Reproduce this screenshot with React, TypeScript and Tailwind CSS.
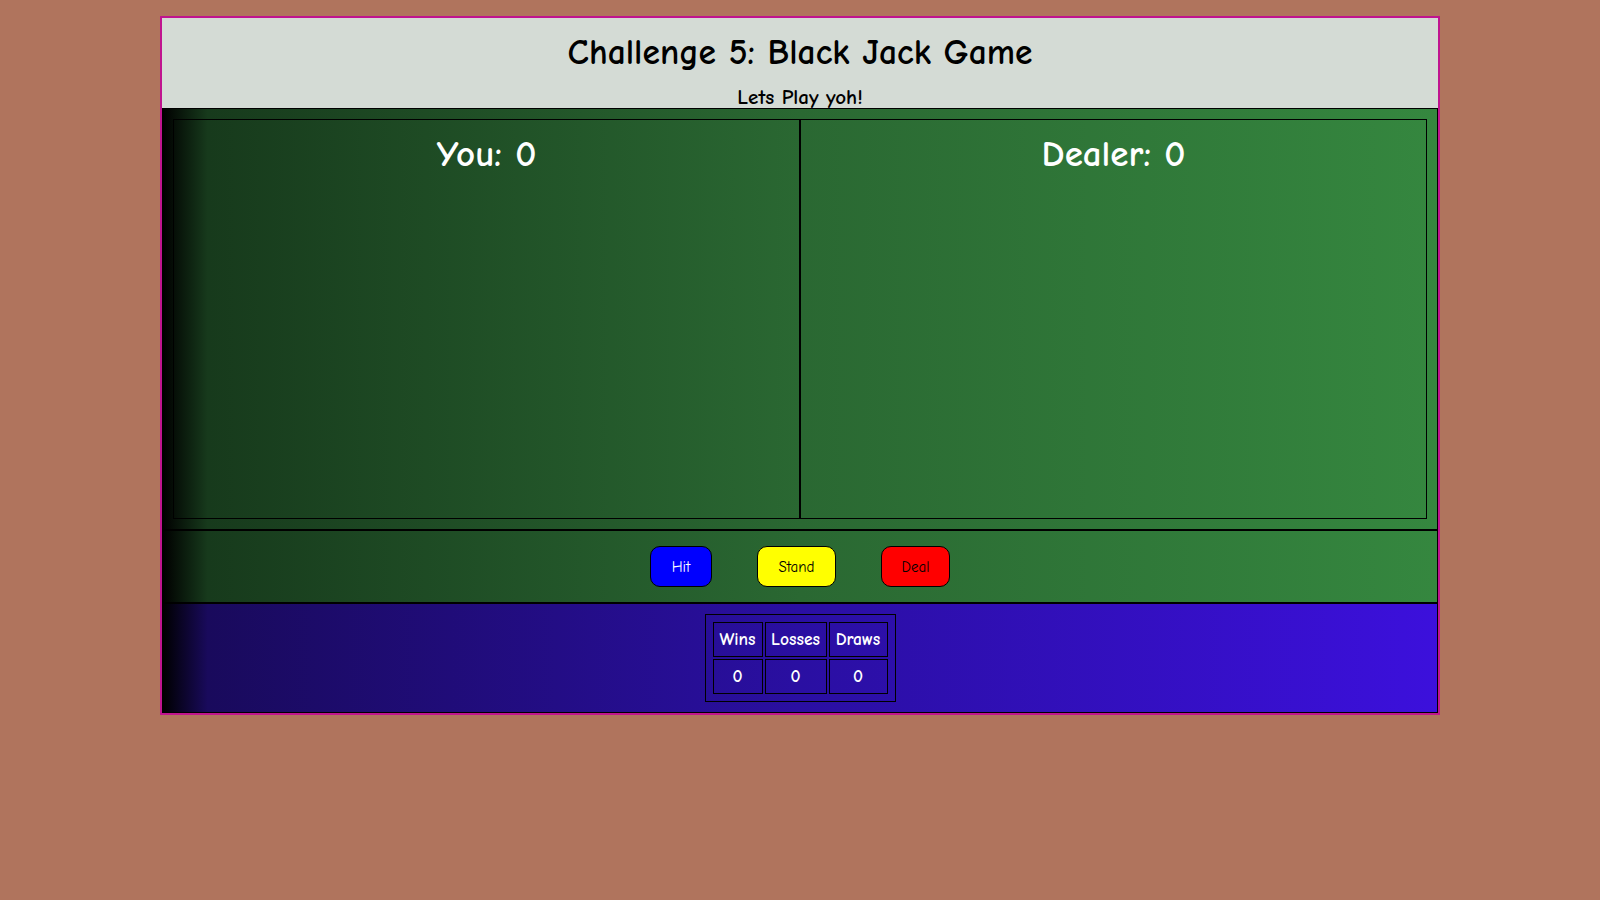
import React from 'react';

const font = { fontFamily: '"Comic Sans MS", "Comic Neue", Lato, "DejaVu Sans", sans-serif' };

const Score: React.FC<{ label: string }> = ({ label }) => (
  <div className="flex-1 h-full border border-black">
    <h1 className="text-white text-[37px] font-bold text-center mt-[13px] leading-[42px]">{label}: 0</h1>
  </div>
);

export default function App() {
  return (
    <div className="min-h-[900px] w-full bg-[#b0745d] pt-[16px]" style={font}>
      <div className="w-[1280px] mx-auto border-2 border-[#c0148f] bg-[#d4dbd5]">
        <div className="h-[90px] flex flex-col items-center">
          <h1 className="text-[35.5px] font-bold text-black leading-[40px] mt-[15px]">Challenge 5: Black Jack Game</h1>
          <h3 className="text-[21px] font-bold text-black leading-[26px] mt-[11px]">Lets Play yoh!</h3>
        </div>

        <div className="border border-black p-[10px] bg-[linear-gradient(to_right,#000_0%,#173a1c_3.5%,#2a6832_50%,#35873f_100%)]">
          <div className="flex h-[400px]">
            <Score label="You" />
            <Score label="Dealer" />
          </div>
        </div>

        <div className="h-[73px] border border-black flex items-center justify-center gap-[45px] bg-[linear-gradient(to_right,#000_0%,#173a1c_3.5%,#2a6832_50%,#35873f_100%)]">
          <button className="w-[62px] h-[41px] pt-[2px] rounded-[10px] border border-black bg-[#0000ff] text-white text-[15px]">Hit</button>
          <button className="w-[79px] h-[41px] pt-[2px] rounded-[10px] border border-black bg-[#ffff00] text-black text-[15px]">Stand</button>
          <button className="w-[69px] h-[41px] pt-[2px] rounded-[10px] border border-black bg-[#ff0000] text-black text-[15px]">Deal</button>
        </div>

        <div className="border border-black py-[10px] flex justify-center bg-[linear-gradient(to_right,#000_0%,#190a5c_3.5%,#2a0fa2_50%,#3c10dc_100%)]">
          <div className="border border-black p-[7px]">
            <div className="grid grid-cols-[50px_62px_59px] gap-[2px] text-white text-[17.5px] font-bold">
              {['Wins', 'Losses', 'Draws'].map((h) => (
                <div key={h} className="h-[35px] border border-black flex items-center justify-center">{h}</div>
              ))}
              {[0, 0, 0].map((v, i) => (
                <div key={i} className="h-[35px] border border-black flex items-center justify-center">{v}</div>
              ))}
            </div>
          </div>
        </div>
      </div>
    </div>
  );
}
